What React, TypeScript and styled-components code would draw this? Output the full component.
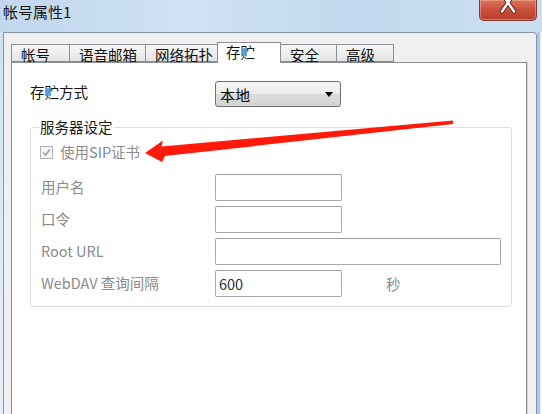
import React from "react";
import styled, { createGlobalStyle } from "styled-components";

const Global = createGlobalStyle`
  html, body { margin: 0; padding: 0; background: #dfeaf5; }
  body { font-family: "Noto Sans CJK SC", "Noto Sans", sans-serif; }
  * { box-sizing: border-box; }
`;

const FONT = `"Noto Sans CJK SC", "Noto Sans", sans-serif`;

const Screen = styled.div`
  position: relative;
  width: 542px;
  height: 414px;
  overflow: hidden;
  display: flex;
  flex-direction: column;
  background: linear-gradient(to bottom, #cfe0f2, #e6eff8);
  font-family: ${FONT};
`;

const TitleBar = styled.div`
  height: 32px;
  display: flex;
  justify-content: space-between;
  align-items: flex-start;
  background: linear-gradient(to right, #c0d7ee 0%, #d0e2f4 35%, #c3d9ef 65%, #cadff2 100%);
`;

const Title = styled.div`
  padding: 2px 0 0 3px;
  font-size: 15px;
  line-height: 20px;
  color: #141414;
`;

const CloseButton = styled.div`
  width: 58px;
  height: 21px;
  margin-right: 5px;
  border: 1px solid #7a3a30;
  border-top: none;
  border-radius: 0 0 5px 5px;
  background: linear-gradient(to bottom, #d9735e 0%, #c9503a 50%, #b63d29 100%);
  box-shadow: inset 0 0 0 1px rgba(255, 190, 170, 0.45);
  display: flex;
  justify-content: center;
`;

const Body = styled.div`
  flex: 1;
  display: flex;
`;

const Client = styled.div`
  margin-left: 3px;
  width: 534px;
  display: flex;
  flex-direction: column;
  padding: 0 9px 0 7px;
  background: #f0f0f0;
  border: 1px solid #8796a6;
  border-bottom: none;
  border-top-right-radius: 4px;
`;

const RightFrame = styled.div`
  flex: 1;
  background: linear-gradient(to right, #a9c7ea, #a9c7ea 3px, #eef4fb 3px);
`;

const TabStrip = styled.div`
  height: 29px;
  display: flex;
  align-items: flex-end;
  padding-left: 1px;
`;

const Tab = styled.div<{ $w: number; $active?: boolean }>`
  position: relative;
  width: ${(p) => p.$w}px;
  height: ${(p) => (p.$active ? 21 : 18)}px;
  margin-bottom: ${(p) => (p.$active ? -1 : 0)}px;
  z-index: ${(p) => (p.$active ? 2 : 1)};
  padding: ${(p) => (p.$active ? "0 0 0 8px" : "1px 0 0 9px")};
  border: 1px solid #8c8e94;
  border-bottom: ${(p) => (p.$active ? "none" : "1px solid #8c8e94")};
  margin-left: -1px;
  background: ${(p) =>
    p.$active ? "#ffffff" : "linear-gradient(to bottom, #f6f6f6, #e5e5e5)"};
  font-size: 14.5px;
  line-height: 17px;
  color: #111;
  white-space: nowrap;
`;

const Panel = styled.div`
  position: relative;
  z-index: 1;
  flex: 1;
  background: #ffffff;
  border: 1px solid #898c95;
  border-bottom: none;
  box-shadow: 1px 0 0 #d6d6d6;
  padding: 18px 14px 0 18px;
`;

const TopRow = styled.div`
  display: grid;
  grid-template-columns: 185px auto;
  align-items: center;
  height: 26px;
`;

const FieldLabel = styled.div`
  font-size: 14.5px;
  line-height: 18px;
  color: #111;
  margin-top: -4px;
`;

const Select = styled.div`
  width: 126px;
  height: 26px;
  display: flex;
  align-items: center;
  justify-content: space-between;
  padding: 0 7px 0 4px;
  border: 1px solid #6f6f6f;
  border-radius: 3px;
  background: linear-gradient(to bottom, #f7f7f7 0%, #ececec 50%, #dcdcdc 51%, #d4d4d4 100%);
  font-size: 15px;
  color: #000;
`;

const Caret = styled.span`
  width: 0;
  height: 0;
  border-left: 4px solid transparent;
  border-right: 4px solid transparent;
  border-top: 5px solid #000;
  margin-top: 1px;
`;

const Group = styled.fieldset`
  margin: 11px 0 0 0;
  min-width: 0;
  padding: 0 0 9px 10px;
  border: 1px solid #d5dfe5;
  border-radius: 3px;
`;

const Legend = styled.legend`
  margin-left: -2px;
  padding: 0 1px;
  font-size: 14.5px;
  line-height: 18px;
  color: #1a1a1a;
`;

const CheckRow = styled.div`
  display: flex;
  align-items: center;
  gap: 7px;
  height: 20px;
  margin: 6px 0 0 -1px;
`;

const CheckBox = styled.span`
  width: 13px;
  height: 13px;
  border: 1px solid #b5b5b5;
  background: linear-gradient(to bottom, #f1f1f1, #fafafa);
  display: flex;
  align-items: center;
  justify-content: center;
`;

const CheckText = styled.span`
  font-size: 14.5px;
  line-height: 18px;
  color: #8d8d8d;
`;

const Latin = styled.span`
  color: #7d8aa6;
`;

const Rows = styled.div`
  display: flex;
  flex-direction: column;
  gap: 5px;
  margin-top: 12px;
`;

const FormRow = styled.div`
  display: grid;
  grid-template-columns: 174px auto auto 1fr;
  align-items: center;
  height: 27px;
`;

const RowLabel = styled.div`
  font-size: 14.5px;
  line-height: 18px;
  color: #8a8a8a;
  margin-top: -2px;
  white-space: nowrap;
`;

const TextBox = styled.div<{ $w: number }>`
  width: ${(p) => p.$w}px;
  height: 27px;
  border: 1px solid #a9abb0;
  border-top-color: #9a9da3;
  border-radius: 2px;
  background: #fff;
  padding-left: 3px;
  font-size: 14.5px;
  line-height: 25px;
  color: #2a2e38;
`;

const Unit = styled.div`
  margin-left: 44px;
  font-size: 14.5px;
  color: #8a8a8a;
`;

const Overlay = styled.svg`
  position: absolute;
  left: 0;
  top: 0;
  pointer-events: none;
  z-index: 10;
`;

const tabs = [
  { label: "帐号", w: 59 },
  { label: "语音邮箱", w: 77 },
  { label: "网络拓扑", w: 73 },
  { label: "存贮", w: 64, active: true },
  { label: "安全", w: 57 },
  { label: "高级", w: 58 },
];

export default function App() {
  return (
    <>
      <Global />
      <Screen>
        <TitleBar>
          <Title>帐号属性1</Title>
          <CloseButton>
            <svg width="20" height="20" viewBox="0 0 20 20">
              <path d="M3.5 -7 L16 11.5 M16.5 -7 L4 11.5" stroke="#5a2018" strokeWidth="4.2" strokeLinecap="round" />
              <path d="M3.5 -7 L16 11.5 M16.5 -7 L4 11.5" stroke="#ffffff" strokeWidth="2.4" strokeLinecap="round" />
            </svg>
          </CloseButton>
        </TitleBar>
        <Body>
          <Client>
            <TabStrip>
              {tabs.map((t) => (
                <Tab key={t.label} $w={t.w} $active={t.active}>
                  {t.label}
                </Tab>
              ))}
            </TabStrip>
            <Panel>
              <TopRow>
                <FieldLabel>存贮方式</FieldLabel>
                <Select>
                  <span>本地</span>
                  <Caret />
                </Select>
              </TopRow>
              <Group>
                <Legend>服务器设定</Legend>
                <CheckRow>
                  <CheckBox>
                    <svg width="9" height="9" viewBox="0 0 9 9">
                      <path d="M1 4.5 L3.5 7 L8 1.5" fill="none" stroke="#a3a3a3" strokeWidth="1.6" />
                    </svg>
                  </CheckBox>
                  <CheckText>
                    使用<Latin>SIP</Latin>证书
                  </CheckText>
                </CheckRow>
                <Rows>
                  <FormRow>
                    <RowLabel>用户名</RowLabel>
                    <TextBox $w={127} />
                  </FormRow>
                  <FormRow>
                    <RowLabel>口令</RowLabel>
                    <TextBox $w={127} />
                  </FormRow>
                  <FormRow>
                    <RowLabel>Root URL</RowLabel>
                    <TextBox $w={286} />
                  </FormRow>
                  <FormRow>
                    <RowLabel>WebDAV 查询间隔</RowLabel>
                    <TextBox $w={127}>600</TextBox>
                    <Unit>秒</Unit>
                  </FormRow>
                </Rows>
              </Group>
            </Panel>
          </Client>
          <RightFrame />
        </Body>
        <Overlay width="542" height="414" viewBox="0 0 542 414">
          <polygon
            points="145,153 163,140.5 161.5,146.5 453,120.5 453,124 165,156 162,162"
            fill="#ff1a0a"
          />
        </Overlay>
      </Screen>
    </>
  );
}
